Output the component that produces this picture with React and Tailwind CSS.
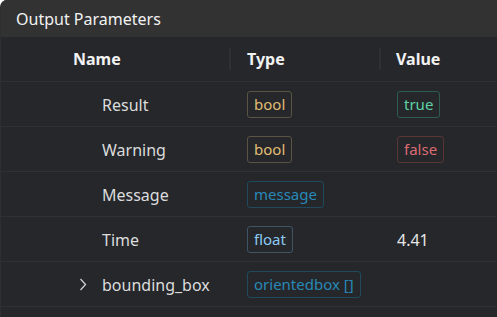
import React from "react";

const rows = [
  { name: "Result", type: "bool", typeTone: "bool", value: { text: "true", tone: "true" } },
  { name: "Warning", type: "bool", typeTone: "bool", value: { text: "false", tone: "false" } },
  { name: "Message", type: "message", typeTone: "ref" },
  { name: "Time", type: "float", typeTone: "float", value: { text: "4.41" } },
  { name: "bounding_box", type: "orientedbox []", typeTone: "ref", expandable: true },
];

const tones = {
  bool: "border-[#5c5442] text-[#e2bd74]",
  float: "border-[#3f5566] text-[#8ccaf0]",
  ref: "border-[#1f4a5e] text-[#2889b8]",
  true: "border-[#2e5c4e] text-[#5ed2a4]",
  false: "border-[#5a3536] text-[#dd6b71]",
};

function Badge({ text, tone }) {
  return (
    <span
      className={`inline-flex items-center h-[27px] px-[6px] rounded-[3px] border text-[15px] leading-none ${tones[tone]}`}
    >
      {text}
    </span>
  );
}

export default function App() {
  return (
    <div
      className="w-[497px] h-[317px] bg-[#25272b] overflow-hidden rounded-tl-[7px] border-l border-[#2e2f33]"
      style={{ fontFamily: '"Noto Sans", "Open Sans", sans-serif' }}
    >
      {/* title bar */}
      <div className="h-[37px] bg-[#323232] flex items-center pl-[15px] text-[16px] text-[#f2f2f2]">
        Output Parameters
      </div>

      {/* column headers */}
      <div className="h-[45px] flex items-center border-b border-[#2f3136] text-[16px] font-bold text-[#f2f2f2]">
        <div className="w-[228px] pl-[72px]">Name</div>
        <div className="w-[2px] h-[22px] bg-[#2e3035]" />
        <div className="w-[148px] pl-[16px]">Type</div>
        <div className="w-[2px] h-[22px] bg-[#2e3035]" />
        <div className="flex-1 pl-[15px]">Value</div>
      </div>

      {rows.map((r) => (
        <div
          key={r.name}
          className="h-[45px] flex items-center pt-[1px] border-b border-[#2f3136] text-[16px] text-[#dcdcdc]"
        >
          <div className="w-[230px] flex items-center">
            <div className="w-[101px] flex justify-end pr-[15px]">
              {r.expandable && (
                <svg width="8" height="13" viewBox="0 0 8 13" fill="none">
                  <path d="M1.5 1 L6.5 6.5 L1.5 12" stroke="#cfcfcf" strokeWidth="1.3" />
                </svg>
              )}
            </div>
            <span>{r.name}</span>
          </div>
          <div className="w-[150px] pl-[16px]">
            <Badge text={r.type} tone={r.typeTone} />
          </div>
          <div className="flex-1 pl-[16px]">
            {r.value &&
              (r.value.tone ? (
                <Badge text={r.value.text} tone={r.value.tone} />
              ) : (
                <span className="text-[#e6e6e6]">{r.value.text}</span>
              ))}
          </div>
        </div>
      ))}
    </div>
  );
}
